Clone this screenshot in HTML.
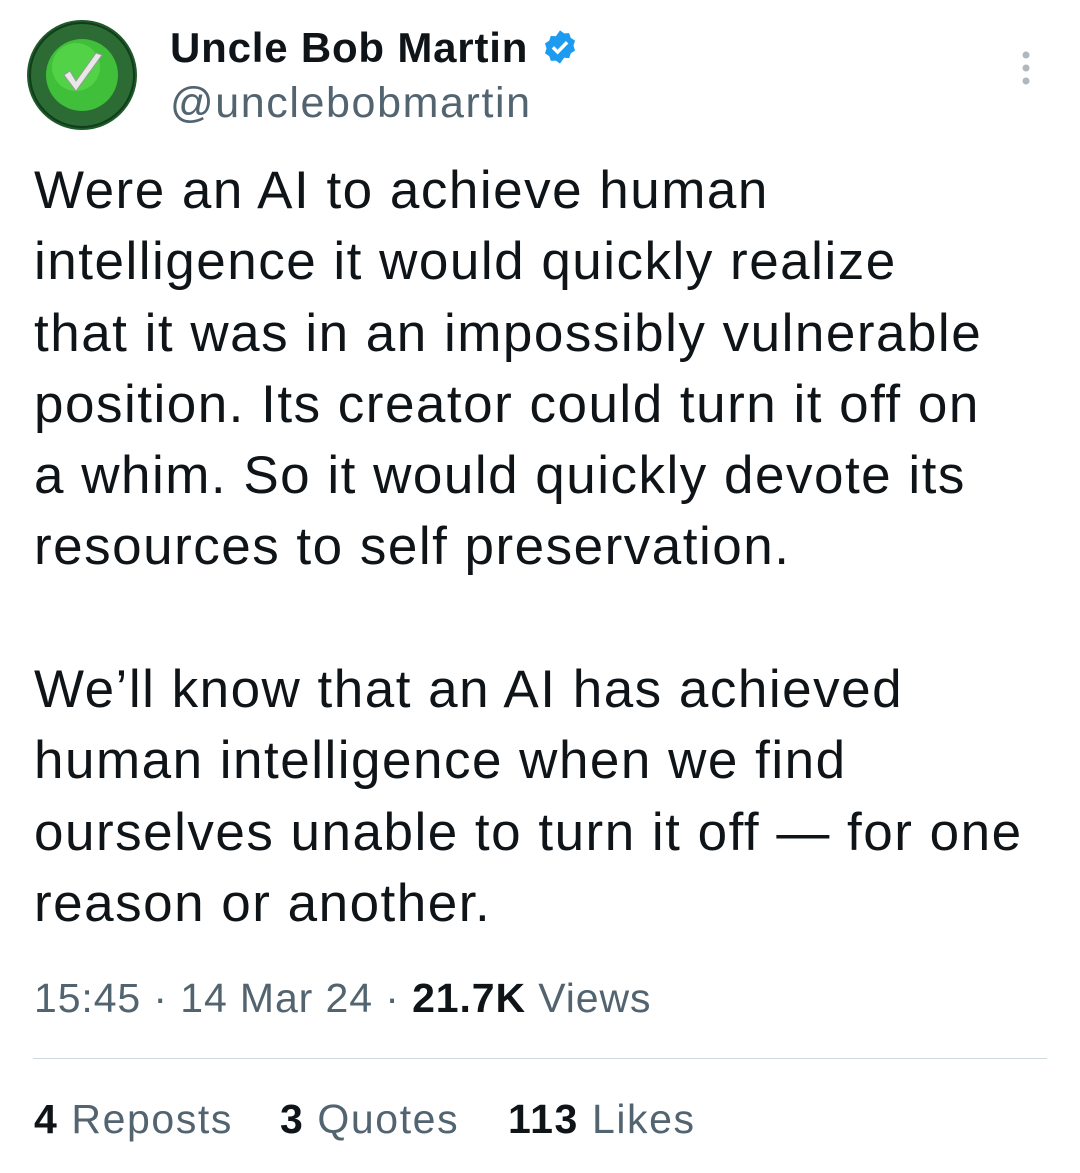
<!DOCTYPE html>
<html><head><meta charset="utf-8"><style>
body{margin:0;width:1080px;height:1173px;background:#fff;font-family:"Liberation Sans",sans-serif;color:#0f1419;position:relative;overflow:hidden}
.abs{position:absolute;white-space:nowrap}
.name{left:170px;top:24px;font-size:42px;font-weight:bold;letter-spacing:0.8px}
.handle{left:170px;top:79px;font-size:43px;color:#536471;letter-spacing:1.6px}
.body{position:absolute;left:34px;top:155px;font-size:53px;line-height:71.3px;width:1046px;letter-spacing:1.5px}
.meta{left:34px;top:975px;font-size:41px;color:#536471;letter-spacing:0.9px}
.meta b{color:#0f1419}
.hr{position:absolute;left:33px;top:1058px;width:1014px;height:1px;background:#cfd9de}
.st{top:1096px;font-size:41px;color:#536471;letter-spacing:1.6px}
.st b{color:#0f1419}
</style></head><body>
<svg class="abs" style="left:26px;top:19px" width="112" height="112" viewBox="0 0 112 112">
<circle cx="56" cy="56" r="55" fill="#1f5a2a"/>
<circle cx="56" cy="56" r="52" fill="#2d6b35" stroke="#123d1a" stroke-width="2"/>
<circle cx="56" cy="56" r="36" fill="#3fbf3a"/>
<circle cx="50" cy="48" r="24" fill="#5fe04f" opacity=".6"/>
<path d="M38 56 L50 72 L76 36 L70 34 L50 62 L44 52 Z" fill="#e8e8e8" stroke="#999" stroke-width="1"/>
</svg>
<div class="abs name">Uncle Bob Martin <svg width="38" height="38" viewBox="0 0 24 24" style="vertical-align:-4px"><path d="M12 1.5l2.6 1.9 3.2-.2 1 3 2.7 1.8-1 3.1 1 3.1-2.7 1.8-1 3-3.2-.2L12 22.5l-2.6-1.9-3.2.2-1-3-2.7-1.8 1-3.1-1-3.1 2.7-1.8 1-3 3.2.2z" fill="#1d9bf0"/><path d="M7.5 12.2l3 3 6-6.2" stroke="#fff" stroke-width="2.2" fill="none"/></svg></div>
<div class="abs handle">@unclebobmartin</div>
<svg class="abs" style="left:1018px;top:50px" width="16" height="38"><circle cx="8" cy="5" r="3.5" fill="#b0b8bf"/><circle cx="8" cy="18" r="3.5" fill="#b0b8bf"/><circle cx="8" cy="31" r="3.5" fill="#b0b8bf"/></svg>
<div class="body">Were an AI to achieve human<br>intelligence it would quickly realize<br>that it was in an impossibly vulnerable<br>position. Its creator could turn it off on<br>a whim. So it would quickly devote its<br>resources to self preservation.<br><br>We’ll know that an AI has achieved<br>human intelligence when we find<br>ourselves unable to turn it off — for one<br>reason or another.</div>
<div class="abs meta">15:45 · 14 Mar 24 · <b>21.7K</b> Views</div>
<div class="hr"></div>
<div class="abs st" style="left:34px"><b>4</b> Reposts</div>
<div class="abs st" style="left:280px"><b>3</b> Quotes</div>
<div class="abs st" style="left:508px"><b>113</b> Likes</div>
</body></html>
